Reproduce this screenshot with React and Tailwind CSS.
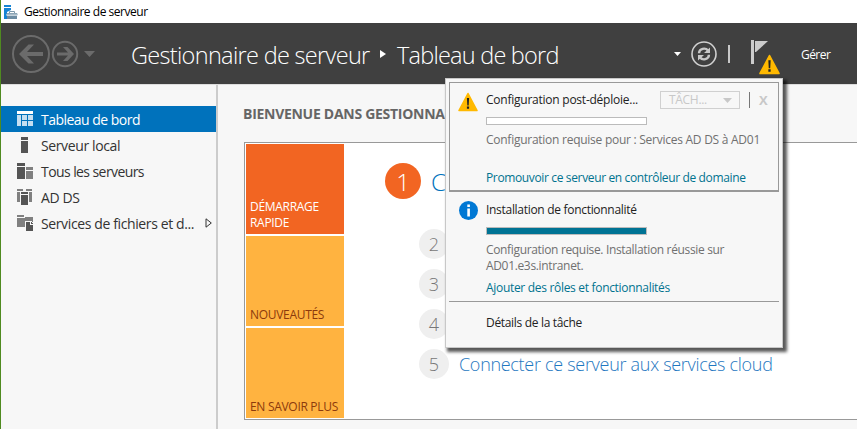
import React from "react";

const steps = [
  { n: "2", label: "" },
  { n: "3", label: "" },
  { n: "4", label: "" },
  { n: "5", label: "Connecter ce serveur aux services cloud" },
];

function ServerManagerIcon() {
  return (
    <svg width="14" height="14" viewBox="0 0 14 14" className="block">
      <path d="M0 0h7v2H0zM0 3h7v2L3 7v7H0z" fill="#1583d3" />
      <path d="M5.500 8V6.500h5V8" fill="none" stroke="#7d98ab" strokeWidth="1" />
      <path d="M3 8h10l1 2H2z" fill="#8ca5b5" />
      <path d="M3 10.500h10V14H3z" fill="#6d8ca2" />
      <path d="M2 10h12" stroke="#d7e1e8" strokeWidth=".8" />
    </svg>
  );
}

function NavArrows() {
  return (
    <svg width="84" height="40" viewBox="0 0 84 40" className="block shrink-0" fill="none">
      <circle cx="20" cy="20" r="18" stroke="#6b6b6b" strokeWidth="2" />
      <path d="M32 18v4H16l7 7.500h-5.500L8 20l9.500-9.500H23L16 18z" fill="#6b6b6b" />
      <circle cx="54" cy="20" r="12.200" stroke="#6b6b6b" strokeWidth="2" />
      <path d="M46 18.500v3h11L52 27h4.500l6.500-7-6.500-7H52l5 5.500z" fill="#6b6b6b" />
      <path d="M73 17h11l-5.500 6z" fill="#6b6b6b" />
    </svg>
  );
}

function RefreshIcon() {
  return (
    <svg width="26" height="26" viewBox="0 0 26 26" className="block shrink-0" fill="none">
      <circle cx="13" cy="13" r="12" stroke="#d0d0d0" strokeWidth="1.600" />
      <path d="M8 12.200c.3-5 6.500-5.800 9-2.700M18 13.800c-.3 5-6.500 5.800-9 2.700" stroke="#c8c8c8" strokeWidth="2.400" />
      <path d="M19 6.500V12h-6zM7 19.500V14h6z" fill="#c8c8c8" />
    </svg>
  );
}

function Warning({ size }) {
  return (
    <svg width={size} height={size} viewBox="0 0 20 20" className="block shrink-0">
      <path d="M10 1.500 19 18.500H1z" fill="#ffb900" stroke="#ffb900" strokeWidth="1.600" strokeLinejoin="round" />
      <path d="M8.900 6h2.200l-.4 7.500H9.300zM8.900 14.600h2.200v2.200H8.900z" fill="#222" />
    </svg>
  );
}

function NavIcon({ kind }) {
  return (
    <svg width="17" height="16" viewBox="0 0 17 16" className="block shrink-0" shapeRendering="crispEdges">
      {kind === "dash" && (
        <>
          <path d="M0 0h16v3H0z" fill="#fff" />
          <path d="M0 4h4v11H0zM5 4h5v5H5zM11 4h5v5h-5zM5 10h5v5H5zM11 10h5v5h-5z" fill="#c5dff1" />
        </>
      )}
      {kind === "local" && <path d="M4 0h7v3H4zM4 4h7v12H4z" fill="#555" />}
      {kind === "all" && (
        <>
          <path d="M0 0h8v3H0zM0 4h8v12H0z" fill="#555" />
          <path d="M9 4h7v3H9zM9 8h7v8H9z" fill="#808080" />
        </>
      )}
      {kind === "ad" && (
        <>
          <path d="M0 0h6v2H3v11H0zM9 0h6v13h-3V2H9z" fill="#808080" />
          <path d="M4 3h7v2H4zM4 6h7v10H4z" fill="#555" />
          <path d="M0 2.500h3M12 2.500h3" stroke="#f7f7f7" />
        </>
      )}
      {kind === "files" && (
        <>
          <path d="M0 0h7v2H0zM0 3h8v9H0z" fill="#808080" />
          <path d="M8 2h8v5H8v5z" fill="#808080" />
          <path d="M8 6h6l3 3v7H8z" fill="#f7f7f7" />
          <path d="M9 7h4v3h3v6H9z" fill="#555" />
          <path d="M14 7l2 2h-2z" fill="#555" />
        </>
      )}
    </svg>
  );
}

function NavItem({ kind, active, children, arrow }) {
  return (
    <div className={active ? "flex h-[26px] items-center bg-[#0072bc] pl-4 tracking-[-0.52px] text-white" : "flex h-[26px] items-center pl-4 text-[#333]"}>
      <NavIcon kind={kind} />
      <span className="ml-[7px] pt-px">{children}</span>
      {arrow && (
        <svg width="7" height="10" viewBox="0 0 7 10" className="ml-auto mr-[4px] block" fill="none">
          <path d="M1 .8v8.400L6.300 5z" stroke="#333" />
        </svg>
      )}
    </div>
  );
}

function Tile({ className, children }) {
  return (
    <div className={`flex h-[90px] w-[98px] items-end whitespace-nowrap pb-[3px] pl-[4px] text-[12px] leading-4 tracking-[-0.3px] ${className}`}>{children}</div>
  );
}

function Notifications() {
  return (
    <div className="absolute left-[444px] top-[78px] flex h-[270px] w-[338px] flex-col border border-[#c8c8c8] bg-[#f7f7f7] p-[3px] text-[12px] leading-4 shadow-[3px_3px_3px_1px_rgba(0,0,0,0.65)]">
      <div className="flex h-[110px] shrink-0 border border-b-2 border-[#999] pl-[8px]">
        <div className="pt-[9px]"><Warning size={20} /></div>
        <div className="ml-[8px] flex flex-col whitespace-nowrap">
          <div className="flex h-[34px] items-center">
            <span className="w-[174px] tracking-[-0.24px] text-[#222]">Configuration post-déploie...</span>
            <div className="flex h-[18px] w-[80px] items-center border border-[#d0d0d0] pl-[8px] text-[#c8c8c8]">
              <span className="tracking-[-0.3px]">TÂCH...</span>
              <svg width="9" height="5" viewBox="0 0 9 5" className="ml-auto mr-[7px]"><path d="M0 0h9L4.500 5z" fill="#c8c8c8" /></svg>
            </div>
            <div className="ml-[9px] h-4 w-px bg-[#777]" />
            <span className="ml-[9px] text-[13px] font-bold text-[#c8c8c8]">X</span>
          </div>
          <div className="h-[8px] w-[161px] border border-[#bbb] bg-white" />
          <div className="mt-[7px] tracking-[-0.26px] text-[#707070]">Configuration requise pour : Services AD DS à AD01</div>
          <div className="mt-[22px] tracking-[-0.36px] text-[#00738f]">Promouvoir ce serveur en contrôleur de domaine</div>
        </div>
      </div>
      <div className="flex h-[110px] shrink-0 border-b border-[#999] pl-[10px]">
        <div className="pt-[9px]">
          <svg width="19" height="19" viewBox="0 0 19 19" className="block">
            <circle cx="9.500" cy="9.500" r="9.500" fill="#0078d4" />
            <path d="M8.300 3.500h2.600v2.600H8.300zM8.300 7.500h2.600v8H8.300z" fill="#fff" />
          </svg>
        </div>
        <div className="ml-[8px] flex flex-col whitespace-nowrap pt-[10px]">
          <div className="tracking-[-0.3px] text-[#222]">Installation de fonctionnalité</div>
          <div className="mt-[9px] h-[8px] w-[161px] border border-[#bbb] bg-[#007394]" />
          <div className="mt-[7px] tracking-[-0.34px] text-[#707070]">Configuration requise. Installation réussie sur<br />AD01.e3s.intranet.</div>
          <div className="mt-[6px] tracking-[-0.31px] text-[#00738f]">Ajouter des rôles et fonctionnalités</div>
        </div>
      </div>
      <div className="pl-[37px] pt-[13px] tracking-[-0.32px] text-[#222]">Détails de la tâche</div>
    </div>
  );
}

export default function App() {
  return (
    <div className="relative flex h-[429px] w-[857px] flex-col overflow-hidden border-l border-[#4f8a20] bg-[#f7f7f7] font-['Open_Sans','Noto_Sans',sans-serif]">
      <div className="flex h-[23px] shrink-0 items-center bg-white pl-[3px] text-[12px] text-black">
        <ServerManagerIcon />
        <span className="ml-[6px] tracking-[-0.47px]">Gestionnaire de serveur</span>
      </div>

      <header className="flex h-[62px] shrink-0 items-center whitespace-nowrap border-b border-[#ddd] bg-[#404040] pl-[10px] text-white">
        <NavArrows />
        <div className="ml-[36px] flex w-[559px] items-center text-[23.5px] font-light">
          <span className="w-[249px] pt-[4px] tracking-[-0.68px]">Gestionnaire de serveur</span>
          <svg width="6" height="8" viewBox="0 0 6 8" className="block shrink-0"><path d="M0 0v8l6-4z" fill="#fff" /></svg>
          <span className="ml-[11px] pt-[4px] tracking-[-0.78px]">Tableau de bord</span>
          <svg width="7" height="4" viewBox="0 0 7 4" className="ml-auto mr-[9px] block"><path d="M0 0h7L3.500 4z" fill="#fff" /></svg>
        </div>
        <div className="ml-px flex items-center">
          <RefreshIcon />
          <div className="ml-[11px] h-[18px] w-[2px] bg-[#c8c8c8]" />
          <div className="ml-[21px] flex h-[38px] w-[30px] pt-[5px]">
            <svg width="17" height="25" viewBox="0 0 17 25" className="block shrink-0">
              <path d="M0 0h3v24H0z" fill="#ccc" />
              <path d="M4 1h13L5 12H4z" fill="#ccc" />
            </svg>
            <div className="-ml-[9px] mt-[14px]"><Warning size={21} /></div>
          </div>
          <span className="ml-[20px] pt-[2px] text-[12px] tracking-[-0.55px]">Gérer</span>
        </div>
      </header>

      <div className="flex min-h-0 flex-1">
        <nav className="w-[217px] shrink-0 border-r-2 border-[#ccc] pt-[21px] text-[14px] tracking-[-0.38px] whitespace-nowrap">
          <NavItem kind="dash" active>Tableau de bord</NavItem>
          <NavItem kind="local">Serveur local</NavItem>
          <NavItem kind="all"><span className="tracking-[-0.58px]">Tous les serveurs</span></NavItem>
          <NavItem kind="ad">AD DS</NavItem>
          <NavItem kind="files" arrow>Services de fichiers et d...</NavItem>
        </nav>

        <main className="min-w-0 flex-1 pl-[26px] pt-[19px]">
          <h1 className="-ml-px h-[20px] whitespace-nowrap text-[14px] leading-5 font-bold tracking-[-0.28px] text-[#666]">BIENVENUE DANS GESTIONNAIRE DE SERVEUR</h1>
          <section className="mt-[18px] flex h-[278px] border border-r-0 border-[#999] bg-white">
            <div className="flex flex-col gap-[2px] pl-px pt-px">
              <Tile className="bg-[#f26522] text-white">DÉMARRAGE<br />RAPIDE</Tile>
              <Tile className="bg-[#ffb340] text-[#8c3a0c]">NOUVEAUTÉS</Tile>
              <Tile className="bg-[#ffb340] text-[#8c3a0c]">EN SAVOIR PLUS</Tile>
            </div>
            <div className="ml-[41px] flex flex-col whitespace-nowrap font-light">
              <div className="mt-[20px] flex h-9 items-center text-[24px] text-[#0072bc]">
                <span className="flex size-9 items-center justify-center rounded-full bg-[#f26522] pt-px text-white">1</span>
                <span className="ml-[10px] pt-[2px]">C</span>
              </div>
              <div className="mt-[30px] flex flex-col gap-[10px] pl-[34px]">
                {steps.map((s) => (
                  <div key={s.n} className="flex h-[30px] items-center text-[18px] text-[#1f78c1]">
                    <span className="flex size-[30px] items-center justify-center rounded-full bg-[#efefef] text-[#777]">{s.n}</span>
                    <span className="ml-[10px] tracking-[-0.3px]">{s.label}</span>
                  </div>
                ))}
              </div>
            </div>
          </section>
        </main>
      </div>

      <Notifications />
    </div>
  );
}
